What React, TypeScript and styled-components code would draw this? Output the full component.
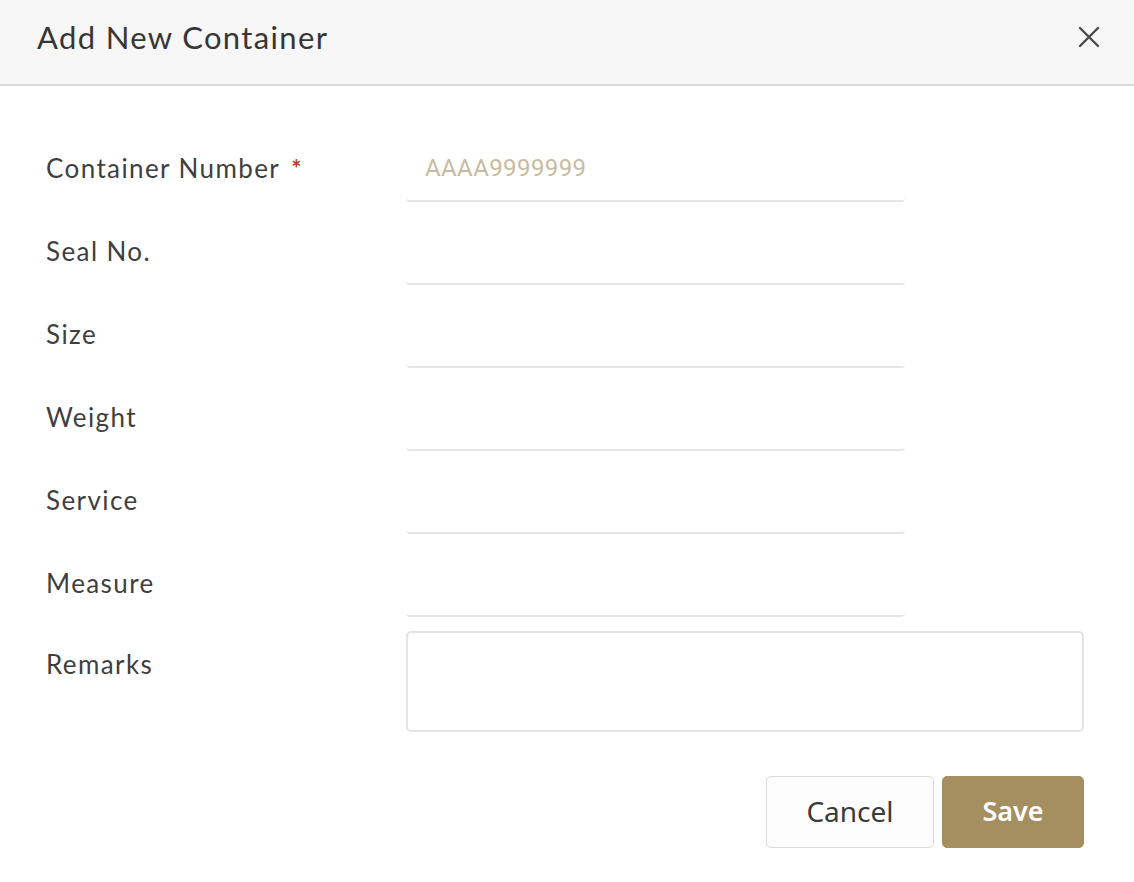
import React from "react";
import styled, { createGlobalStyle } from "styled-components";

const Global = createGlobalStyle`
  html, body { margin: 0; padding: 0; background: #ffffff; }
  body { font-family: Lato, "Open Sans", sans-serif; color: #3d3d3d; }
  * { box-sizing: border-box; }
`;

const Dialog = styled.div`
  width: 1134px;
  height: 882px;
  background: #ffffff;
  display: flex;
  flex-direction: column;
`;

const Header = styled.header`
  height: 86px;
  background: #f7f7f7;
  border-bottom: 2px solid #d9d9d9;
  display: flex;
  align-items: center;
  justify-content: space-between;
  padding: 0 33px 10px 37px;
`;

const Title = styled.h1`
  margin: 0;
  font-family: Lato, sans-serif;
  font-weight: 400;
  font-size: 31px;
  letter-spacing: 1.35px;
  color: #363636;
`;

const CloseButton = styled.button`
  border: 0;
  background: transparent;
  padding: 0;
  width: 24px;
  height: 24px;
  display: flex;
  align-items: center;
  justify-content: center;
  cursor: pointer;
`;

const Body = styled.form`
  display: flex;
  flex-direction: column;
  padding: 54px 50px 0 46px;
`;

const Fields = styled.div`
  display: flex;
  flex-direction: column;
  gap: 21px;
`;

const Row = styled.div`
  display: grid;
  grid-template-columns: 360px 1fr;
  align-items: start;
`;

const Label = styled.label<{ $offset?: number }>`
  font-family: Lato, sans-serif;
  font-size: 26px;
  letter-spacing: 1.4px;
  color: #3f3f3f;
  line-height: 56px;
  height: 62px;
  padding-top: ${(p) => p.$offset ?? 0}px;
  white-space: nowrap;
`;

const Required = styled.span`
  color: #c0392b;
  margin-left: 11px;
  font-size: 24px;
  font-weight: 700;
`;

const LineInput = styled.input`
  width: 499px;
  height: 62px;
  border: 0;
  border-bottom: 2px solid #e6e6e6;
  border-radius: 0 0 4px 4px;
  padding: 0 19px 4px;
  font-family: Roboto, sans-serif;
  font-size: 24px;
  letter-spacing: 0.4px;
  color: #333;
  background: transparent;
  outline: none;
  &::placeholder { color: #c8bb9f; }
`;

const TextArea = styled.textarea`
  width: 678px;
  height: 101px;
  border: 2px solid #e3e3e3;
  border-radius: 5px;
  padding: 10px 14px;
  font-family: Roboto, sans-serif;
  font-size: 22px;
  resize: none;
  outline: none;
`;

const RemarksRow = styled(Row)`
  margin-top: -7px;
`;

const Actions = styled.div`
  display: flex;
  justify-content: flex-end;
  gap: 8px;
  margin-top: 44px;
`;

const Button = styled.button<{ $primary?: boolean }>`
  height: 72px;
  width: ${(p) => (p.$primary ? "142px" : "168px")};
  border-radius: 5px;
  border: 1px solid ${(p) => (p.$primary ? "#a58f61" : "#dcdcdc")};
  background: ${(p) => (p.$primary ? "#a58f61" : "#fdfdfd")};
  color: ${(p) => (p.$primary ? "#ffffff" : "#3a3a3a")};
  font-family: "Noto Sans", sans-serif;
  font-size: ${(p) => (p.$primary ? "27px" : "28px")};
  font-weight: ${(p) => (p.$primary ? 600 : 400)};
  padding-bottom: 4px;
  cursor: pointer;
`;

const fields = ["Seal No.", "Size", "Weight", "Service", "Measure"];

export default function App() {
  return (
    <>
      <Global />
      <Dialog>
        <Header>
          <Title>Add New Container</Title>
          <CloseButton aria-label="Close">
            <svg width="22" height="22" viewBox="0 0 22 22">
              <path d="M2 2 L20 20 M20 2 L2 20" stroke="#4a4a4a" strokeWidth="2.4" strokeLinecap="round" />
            </svg>
          </CloseButton>
        </Header>
        <Body>
          <Fields>
            <Row>
              <Label>
                Container Number<Required>*</Required>
              </Label>
              <LineInput placeholder="AAAA9999999" />
            </Row>
            {fields.map((f) => (
              <Row key={f}>
                <Label>{f}</Label>
                <LineInput />
              </Row>
            ))}
            <RemarksRow>
              <Label $offset={5}>Remarks</Label>
              <TextArea />
            </RemarksRow>
          </Fields>
          <Actions>
            <Button type="button">Cancel</Button>
            <Button type="button" $primary>
              Save
            </Button>
          </Actions>
        </Body>
      </Dialog>
    </>
  );
}
